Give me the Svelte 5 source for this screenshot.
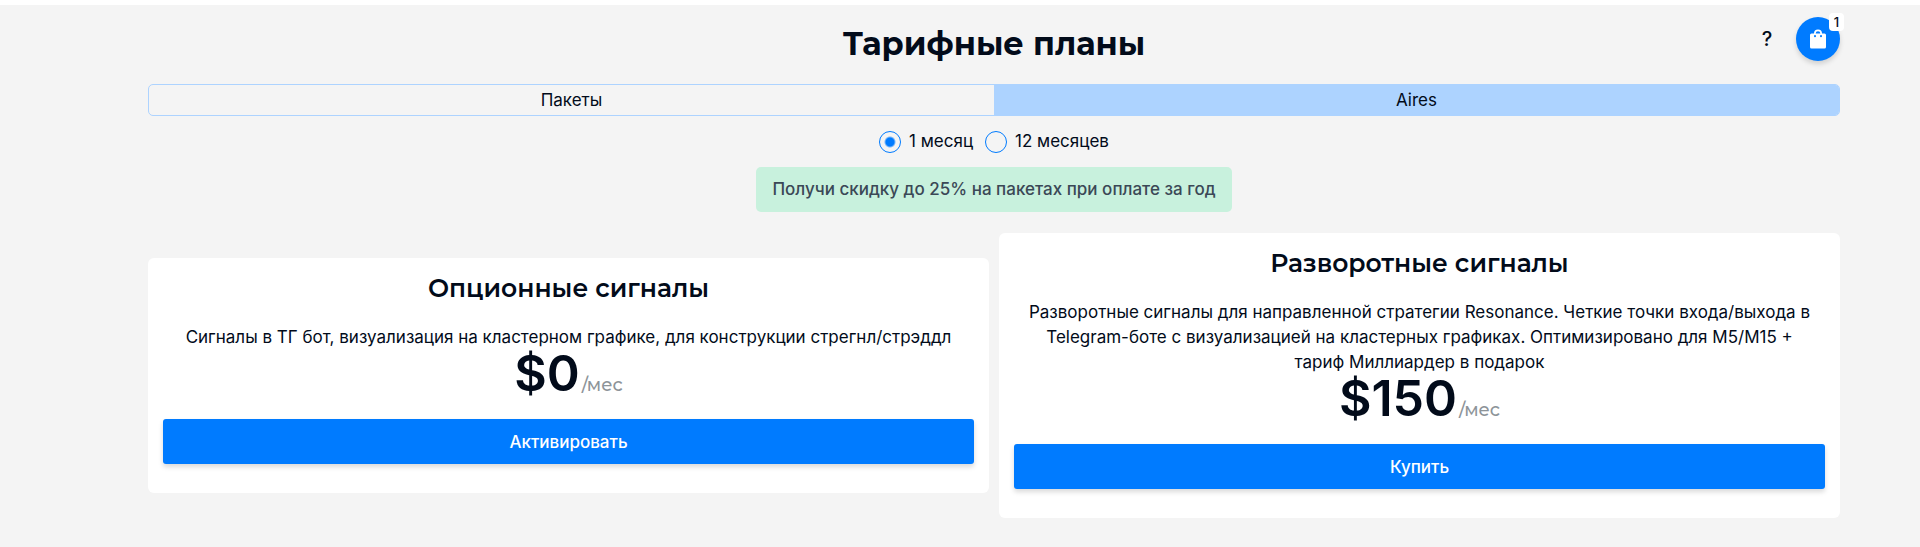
<script lang="ts">
  interface Plan {
    id: string;
    title: string;
    description: string;
    price: number;
    action: string;
  }

  const tabs = ["Пакеты", "Aires"];
  const periods = [
    { value: 1, label: "1 месяц" },
    { value: 12, label: "12 месяцев" },
  ];
  const plans: Plan[] = [
    {
      id: "options",
      title: "Опционные сигналы",
      description:
        "Сигналы в ТГ бот, визуализация на кластерном графике, для конструкции стрегнл/стрэддл",
      price: 0,
      action: "Активировать",
    },
    {
      id: "reversal",
      title: "Разворотные сигналы",
      description:
        "Разворотные сигналы для направленной стратегии Resonance. Четкие точки входа/выхода в Telegram-боте с визуализацией на кластерных графиках. Оптимизировано для M5/M15 + тариф Миллиардер в подарок",
      price: 150,
      action: "Купить",
    },
  ];

  let activeTab = $state("Aires");
  let period = $state(1);
  let cartCount = $state(1);
</script>

<main class="page">
  <header class="header">
    <h1>Тарифные планы</h1>
    <div class="actions">
      <button class="help" aria-label="Помощь">?</button>
      <button class="cart" aria-label="Корзина">
        <svg viewBox="0 0 16 20" width="16" height="20" aria-hidden="true">
          <path
            fill="#fff"
            fill-rule="evenodd"
            d="M4 4.500a4 4 0 0 1 8 0h2.500A1.500 1.500 0 0 1 16 6V18a1.500 1.500 0 0 1-1.500 1.500H1.500A1.500 1.500 0 0 1 0 18V6A1.500 1.500 0 0 1 1.500 4.500Zm1.700 0h4.600a2.300 2.300 0 0 0-4.600 0ZM4 6.300v1a1 1 0 0 0 2 0v-1Zm6 0v1a1 1 0 0 0 2 0v-1Z"
          />
        </svg>
        <span class="badge">{cartCount}</span>
      </button>
    </div>
  </header>

  <div class="tabs" role="tablist">
    {#each tabs as tab}
      <button
        role="tab"
        class="tab"
        class:active={activeTab === tab}
        aria-selected={activeTab === tab}
        onclick={() => (activeTab = tab)}
      >
        {tab}
      </button>
    {/each}
  </div>

  <div class="periods" role="radiogroup" aria-label="Период оплаты">
    {#each periods as p}
      <label class="period">
        <input type="radio" name="period" value={p.value} bind:group={period} />
        {p.label}
      </label>
    {/each}
  </div>

  <p class="discount">Получи скидку до 25% на пакетах при оплате за год</p>

  <section class="plans">
    {#each plans as plan (plan.id)}
      <article class="card">
        <h2>{plan.title}</h2>
        <p class="description">{plan.description}</p>
        <div class="price">
          <span class="amount">${plan.price}</span>
          <span class="unit">/мес</span>
        </div>
        <button class="buy">{plan.action}</button>
      </article>
    {/each}
  </section>
</main>

<style>
  :global(body) {
    margin: 0;
    background: #f4f4f4;
  }
  .page {
    display: flex;
    flex-direction: column;
    padding: 0 80px 29px 148px;
    border-top: 5px solid #fff;
    background: #f4f4f4;
    color: #020b1a;
    font-family: Inter, "Noto Sans", sans-serif;
    font-size: 17px;
    line-height: 25px;
  }
  button {
    padding: 0;
    border: 0;
    color: inherit;
    font: inherit;
    cursor: pointer;
  }
  h1,
  h2,
  p {
    margin: 0;
  }
  h1,
  h2,
  .unit {
    font-family: Montserrat, Inter, sans-serif;
  }
  .header {
    display: grid;
    grid-template-columns: 1fr auto 1fr;
    align-items: start;
    height: 79px;
  }
  h1 {
    grid-column: 2;
    padding-top: 19px;
    font-size: 32px;
    font-weight: 700;
    line-height: 40px;
  }
  .actions {
    display: flex;
    align-items: center;
    justify-content: flex-end;
    gap: 18px;
    padding-top: 12px;
  }
  .help {
    width: 22px;
    background: none;
    font-size: 20px;
    font-weight: 500;
    line-height: 44px;
  }
  .cart {
    position: relative;
    display: flex;
    align-items: center;
    justify-content: center;
    width: 44px;
    height: 44px;
    border-radius: 50%;
    background: #007bff;
    box-shadow: 0 3px 5px rgba(0, 0, 0, 0.15);
  }
  .badge {
    position: absolute;
    top: -4px;
    right: -4px;
    width: 15px;
    border-radius: 4px;
    background: #fff;
    font-size: 13px;
    font-weight: 500;
    line-height: 18px;
  }
  .tabs {
    display: flex;
    overflow: hidden;
    border: 1px solid #add3ff;
    border-radius: 5px;
  }
  .tab {
    flex: 1;
    background: transparent;
    line-height: 30px;
  }
  .tab.active {
    background: #add3ff;
  }
  .periods {
    display: flex;
    justify-content: center;
    gap: 12px;
    padding: 13px 0;
  }
  .period {
    display: flex;
    align-items: center;
    gap: 8px;
    cursor: pointer;
  }
  .period input {
    appearance: none;
    width: 22px;
    height: 22px;
    margin: 0;
    border: 1px solid #007bff;
    border-radius: 50%;
  }
  .period input:checked {
    background: radial-gradient(circle, #007bff 4px, transparent 6px);
  }
  .discount {
    align-self: center;
    padding: 10px 16px;
    border-radius: 5px;
    background: #c8f1dd;
    color: #3b4856;
    font-weight: 500;
  }
  .plans {
    display: grid;
    grid-template-columns: 1fr 1fr;
    align-items: center;
    gap: 10px;
    margin-top: 21px;
  }
  .card {
    display: flex;
    flex-direction: column;
    padding: 15px 15px 29px;
    border-radius: 6px;
    background: #fff;
    text-align: center;
  }
  h2 {
    font-size: 25px;
    font-weight: 600;
    line-height: 30px;
  }
  .description {
    padding: 22px 8px 0;
  }
  .price {
    display: flex;
    align-items: baseline;
    justify-content: center;
    gap: 2px;
    height: 69px;
    line-height: 46px;
  }
  .amount {
    font-size: 50px;
    font-weight: 600;
  }
  .unit {
    color: #8d9499;
    font-size: 18px;
    font-weight: 500;
  }
  .buy {
    padding-top: 1px;
    border-radius: 3px;
    background: #007bff;
    box-shadow: 0 3px 5px rgba(0, 0, 0, 0.15);
    color: #fff;
    font-weight: 500;
    line-height: 44px;
  }
</style>
